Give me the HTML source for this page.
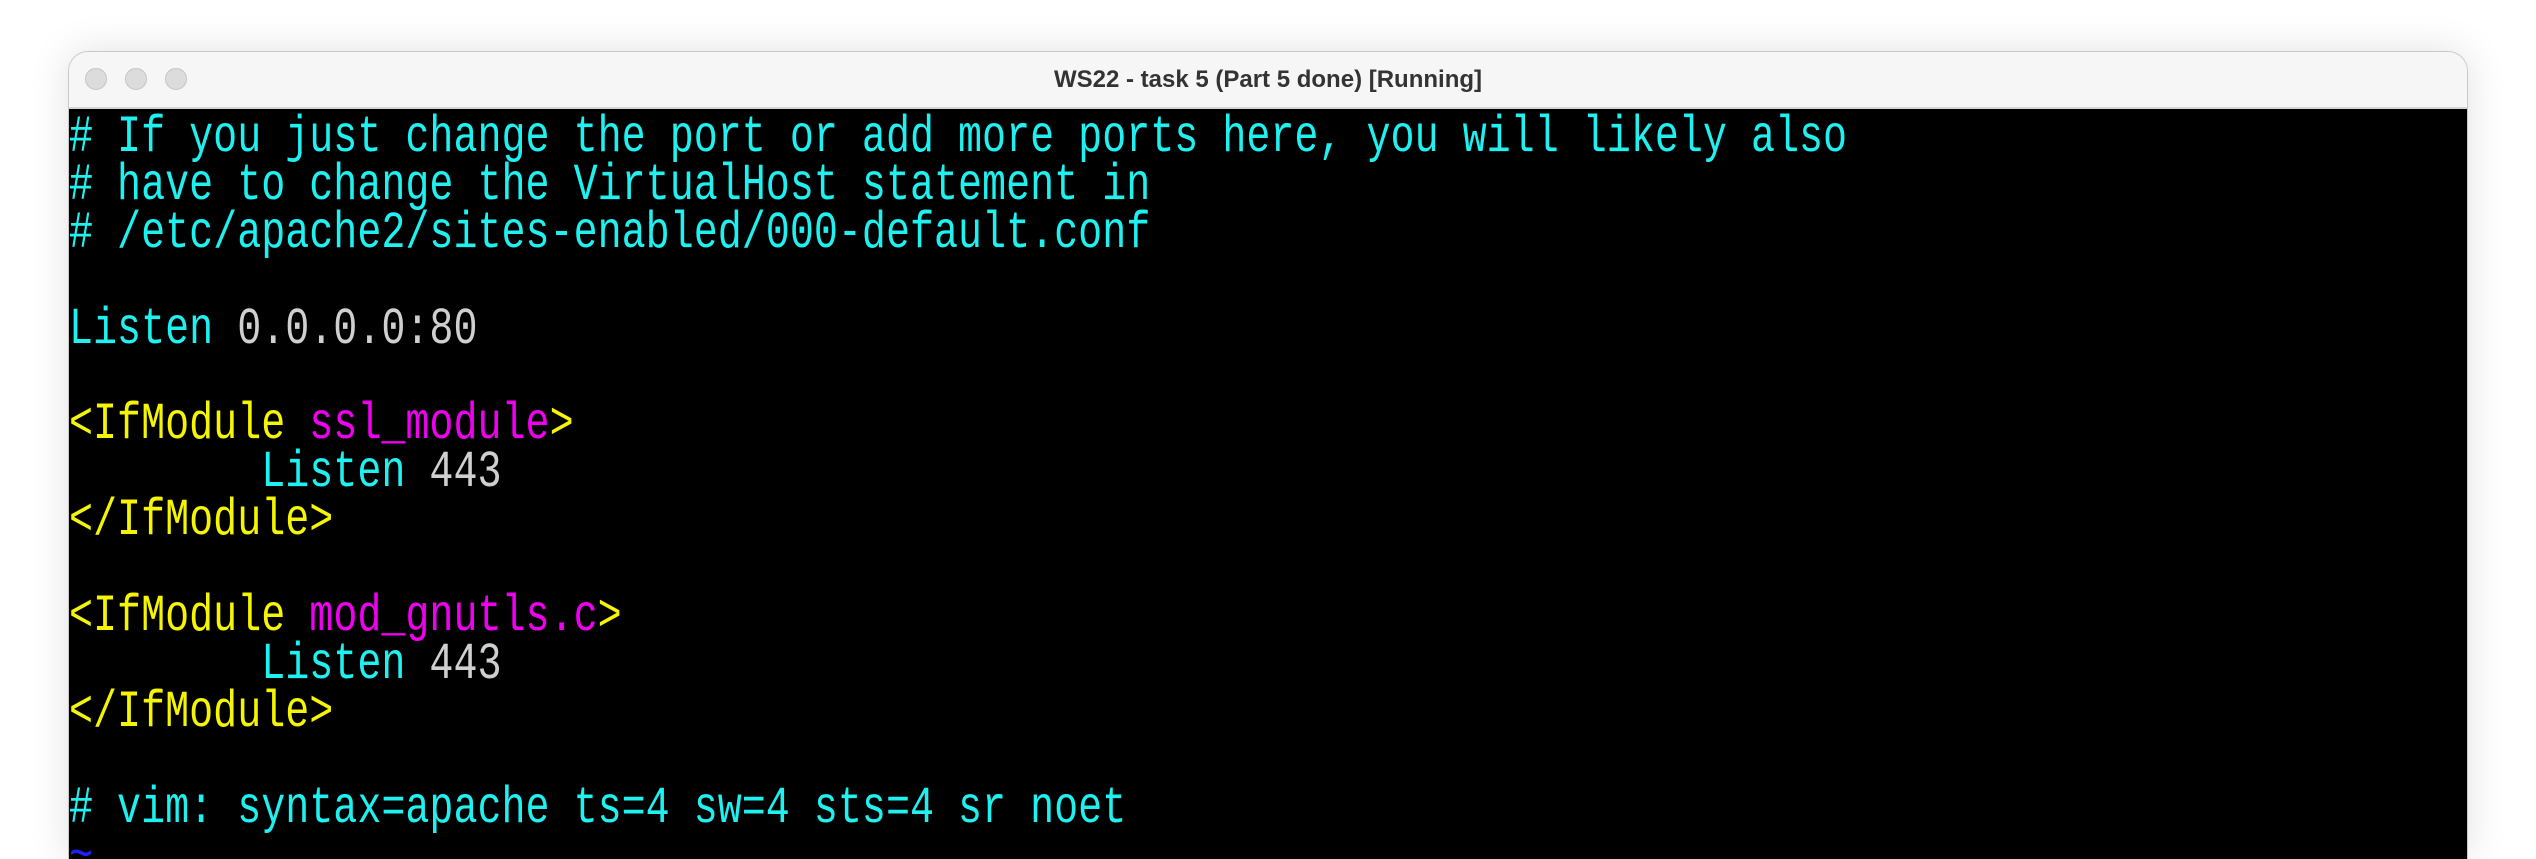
<!DOCTYPE html>
<html style="overflow:hidden;height:859px"><head><style>
body{margin:0;width:2536px;height:859px;background:#fff;overflow:hidden;position:relative;font-family:"Liberation Sans",sans-serif}
.win{position:absolute;left:68px;top:51px;width:2400px;height:808px;border-radius:20px 20px 0 0;overflow:hidden;box-shadow:0 0 40px rgba(0,0,0,.12);border:1px solid #c8c8c8;border-bottom:none;box-sizing:border-box}
.tb{height:55px;background:#f6f6f6;border-bottom:2px solid #d4d4d4;position:relative}
.dot{position:absolute;top:16px;width:22px;height:22px;border-radius:50%;background:#dcdcdc;border:1px solid #c4c4c4;box-sizing:border-box}
.title{position:absolute;left:0;right:0;top:14px;text-align:center;font-weight:bold;font-size:24px;color:#333}
.term{background:#000;height:751px;position:relative;overflow:hidden}
pre{margin:0;position:absolute;left:0;top:5px;font-family:"Liberation Mono",monospace;font-size:52px;line-height:47.9px;transform:scaleX(0.77);transform-origin:0 0;color:#1ff0f0}
.y{color:#f5f500}.m{color:#f000f0}.g{color:#cfcfcf}.b{color:#2020ff}
</style></head><body>
<div class="win">
<div class="tb">
<div class="dot" style="left:16px"></div><div class="dot" style="left:56px"></div><div class="dot" style="left:96px"></div>
<div class="title">WS22 - task 5 (Part 5 done) [Running]</div>
</div>
<div class="term"><pre># If you just change the port or add more ports here, you will likely also
# have to change the VirtualHost statement in
# /etc/apache2/sites-enabled/000-default.conf

Listen <span class="g">0.0.0.0:80</span>

<span class="y">&lt;IfModule </span><span class="m">ssl_module</span><span class="y">&gt;</span>
        Listen <span class="g">443</span>
<span class="y">&lt;/IfModule&gt;</span>

<span class="y">&lt;IfModule </span><span class="m">mod_gnutls.c</span><span class="y">&gt;</span>
        Listen <span class="g">443</span>
<span class="y">&lt;/IfModule&gt;</span>

# vim: syntax=apache ts=4 sw=4 sts=4 sr noet
<span class="b">~</span></pre></div>
</div>
</body></html>
